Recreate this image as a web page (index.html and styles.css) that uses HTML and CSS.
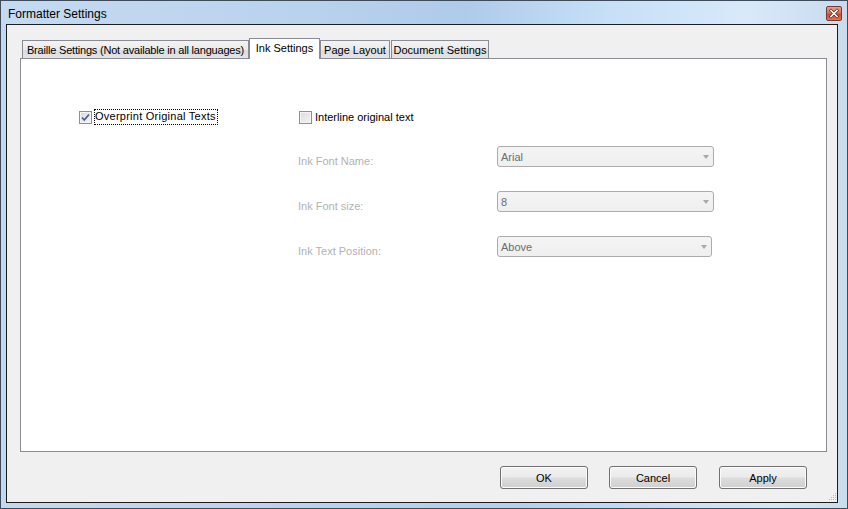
FILE: index.html
```html
<!DOCTYPE html>
<html>
<head>
<meta charset="utf-8">
<link rel="stylesheet" href="styles.css">
</head>
<body>
<div class="window">
  <div class="titlebar">
    <span class="title">Formatter Settings</span>
    <span class="close">
      <svg width="16" height="15" viewBox="0 0 16 15">
        <path d="M4.5 4 L11.5 11 M11.5 4 L4.5 11" stroke="#5a1a10" stroke-width="3.2" stroke-linecap="square"/>
        <path d="M4.5 4 L11.5 11 M11.5 4 L4.5 11" stroke="#ffffff" stroke-width="1.8" stroke-linecap="square"/>
      </svg>
    </span>
  </div>
  <div class="client">
    <div class="tabs">
      <div class="tab t1"><span class="narrow">Braille Settings (Not available in all languages)</span></div>
      <div class="tab t2 active">Ink Settings</div>
      <div class="tab t3">Page Layout</div>
      <div class="tab t4">Document Settings</div>
    </div>
    <div class="panel">
      <div class="checks">
        <div class="check first">
          <span class="box">
            <svg width="11" height="11" viewBox="0 0 11 11">
              <path d="M2 5.5 L4.3 8 L9 2.5" fill="none" stroke="#4c5f8c" stroke-width="1.7"/>
            </svg>
          </span>
          <span class="focus">Overprint Original Texts</span>
        </div>
        <div class="check">
          <span class="box"></span>
          <span class="ctext">Interline original text</span>
        </div>
      </div>
      <div class="fields">
        <span class="flabel">Ink Font Name:</span>
        <div class="combo">Arial<span class="arrow"></span></div>
        <span class="flabel">Ink Font size:</span>
        <div class="combo">8<span class="arrow"></span></div>
        <span class="flabel">Ink Text Position:</span>
        <div class="combo short">Above<span class="arrow"></span></div>
      </div>
    </div>
    <div class="footer">
      <span class="btn">OK</span>
      <span class="btn">Cancel</span>
      <span class="btn apply">Apply</span>
      <span class="grip">
        <svg width="10" height="10" viewBox="0 0 10 10">
          <g fill="#b8b8b8">
            <rect x="8" y="2" width="1" height="1"/>
            <rect x="6" y="4" width="1" height="1"/><rect x="8" y="4" width="1" height="1"/>
            <rect x="4" y="6" width="1" height="1"/><rect x="6" y="6" width="1" height="1"/><rect x="8" y="6" width="1" height="1"/>
            <rect x="2" y="8" width="1" height="1"/><rect x="4" y="8" width="1" height="1"/><rect x="6" y="8" width="1" height="1"/><rect x="8" y="8" width="1" height="1"/>
          </g>
        </svg>
      </span>
    </div>
  </div>
</div>
</body>
</html>
```
FILE: styles.css
```css
html, body {
  margin: 0;
  padding: 0;
}
body {
  width: 848px;
  height: 509px;
  overflow: hidden;
  background: #ffffff;
  font-family: "Liberation Sans", Arial, sans-serif;
  font-size: 11px;
  color: #000;
}
.window {
  box-sizing: border-box;
  width: 848px;
  height: 509px;
  border: 1px solid #3e4b5b;
  padding: 0 9px 5px 5px;
  background: linear-gradient(90deg, #c3d9ef 0%, #bcd4ed 30%, #b3cfec 60%, #c8e0f6 80%, #d6e7f8 92%, #c9dcee 100%);
  display: flex;
  flex-direction: column;
}
.titlebar {
  height: 23px;
  margin: 0 -9px 0 -5px;
  padding: 0 5px 0 7px;
  display: flex;
  align-items: center;
  justify-content: space-between;
  background: linear-gradient(90deg, #c4daf0 0%, #bad3ed 35%, #aecbea 55%, #c6e0f7 72%, #d8e9fa 88%, #c8dbee 100%);
}
.title {
  font-size: 12px;
  color: #000;
  padding-top: 3px;
}
.close {
  width: 16px;
  height: 15px;
  margin-top: 2px;
  box-sizing: border-box;
  border: 1px solid #7a3a2e;
  border-radius: 2px;
  background: linear-gradient(180deg, #e8a08a 0%, #d9705a 45%, #c84a2e 55%, #d9785a 100%);
  display: flex;
  align-items: center;
  justify-content: center;
}
.close svg {
  display: block;
}
.client {
  flex: 1;
  position: relative;
  border: 1px solid #1c1c1c;
  background: #f0f0f0;
  display: flex;
  flex-direction: column;
  padding: 13px 10px 0 13px;
}
.tabs {
  height: 20px;
  display: flex;
  align-items: flex-end;
  padding-left: 2px;
  position: relative;
  z-index: 2;
}
.tab {
  box-sizing: border-box;
  height: 18px;
  border: 1px solid #898c95;
  border-bottom: none;
  background: linear-gradient(180deg, #f3f3f3 0%, #ebebeb 50%, #dcdcdc 51%, #e3e3e3 100%);
  display: flex;
  align-items: center;
  justify-content: center;
  padding-top: 1px;
  white-space: nowrap;
}
.narrow {
  letter-spacing: -0.2px;
}
.t1 { width: 227px; }
.t2 { width: 71px; }
.t3 { width: 70px; }
.t4 { width: 98px; margin-left: 1px; }
.tab.active {
  height: 21px;
  margin-bottom: -1px;
  background: #ffffff;
  padding-top: 0;
  padding-bottom: 3px;
}
.panel {
  box-sizing: border-box;
  height: 394px;
  border: 1px solid #898c95;
  background: #ffffff;
}
.checks {
  display: flex;
  margin-top: 50px;
  padding-left: 58px;
  height: 16px;
  align-items: center;
}
.check {
  display: flex;
  align-items: center;
  gap: 3px;
}
.check.first {
  width: 220px;
}
.box {
  box-sizing: border-box;
  width: 13px;
  height: 13px;
  border: 1px solid #8f8f8f;
  background: linear-gradient(135deg, #dcdcdc 0%, #f4f4f4 100%);
  box-shadow: inset 0 0 0 1px #f4f4f4;
  display: flex;
  align-items: center;
  justify-content: center;
}
.box svg {
  display: block;
}
.focus {
  outline: 1px dotted #000;
  outline-offset: 0;
  padding: 0 1px 1px 0;
  line-height: 13px;
  letter-spacing: 0.25px;
}
.ctext {
  line-height: 13px;
}
.fields {
  display: grid;
  grid-template-columns: 199px auto;
  grid-auto-rows: 21px;
  row-gap: 24px;
  margin-top: 21px;
  margin-left: 277px;
  justify-items: start;
}
.flabel {
  color: #b2b2b2;
  align-self: center;
  padding-top: 9px;
}
.combo {
  box-sizing: border-box;
  width: 217px;
  height: 21px;
  border: 1px solid #acacac;
  border-radius: 3px;
  background: linear-gradient(180deg, #f4f4f4 0%, #efefef 100%);
  color: #6d6d6d;
  padding-left: 3px;
  display: flex;
  align-items: center;
  justify-content: space-between;
  padding-right: 4px;
}
.combo.short {
  width: 215px;
}
.arrow {
  width: 0;
  height: 0;
  border-left: 3.5px solid transparent;
  border-right: 3.5px solid transparent;
  border-top: 4px solid #a8a8a8;
  margin-top: 1px;
}
.footer {
  flex: 1;
  display: flex;
  justify-content: flex-end;
  align-items: flex-start;
  padding-top: 14px;
  padding-right: 20px;
}
.btn {
  box-sizing: border-box;
  width: 88px;
  height: 23px;
  border: 1px solid #707070;
  border-radius: 3px;
  background: linear-gradient(180deg, #f2f2f2 0%, #ebebeb 48%, #dddddd 52%, #cfcfcf 100%);
  box-shadow: inset 0 0 0 1px #fbfbfb;
  display: flex;
  align-items: center;
  justify-content: center;
  margin-left: 21px;
}
.btn.apply {
  margin-left: 22px;
}
.grip {
  position: absolute;
  right: 0;
  bottom: 1px;
  width: 10px;
  height: 10px;
}
.grip svg {
  display: block;
}
```
